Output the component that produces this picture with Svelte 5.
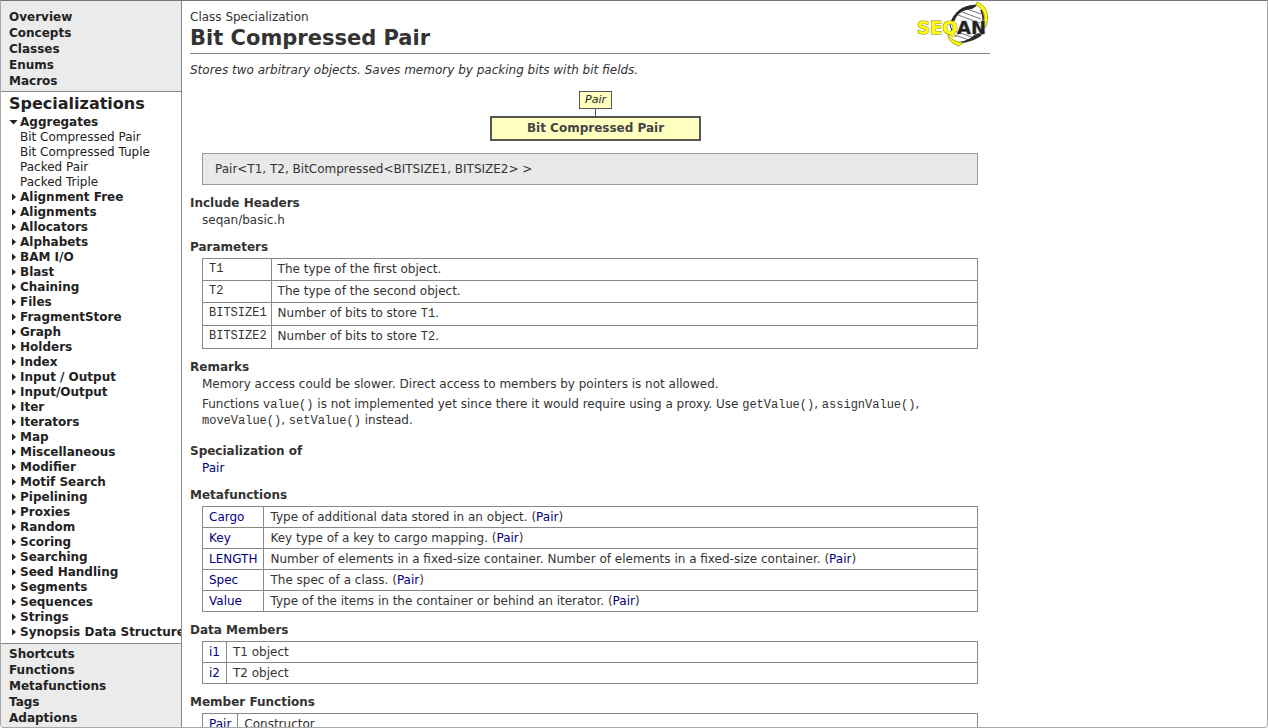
<script>
  const topLinks = ['Overview', 'Concepts', 'Classes', 'Enums', 'Macros'];
  const bottomLinks = ['Shortcuts', 'Functions', 'Metafunctions', 'Tags', 'Adaptions'];
  const groups = [
    { name: 'Aggregates', children: ['Bit Compressed Pair', 'Bit Compressed Tuple', 'Packed Pair', 'Packed Triple'] },
    ...[
      'Alignment Free', 'Alignments', 'Allocators', 'Alphabets', 'BAM I/O', 'Blast', 'Chaining', 'Files',
      'FragmentStore', 'Graph', 'Holders', 'Index', 'Input / Output', 'Input/Output', 'Iter', 'Iterators',
      'Map', 'Miscellaneous', 'Modifier', 'Motif Search', 'Pipelining', 'Proxies', 'Random', 'Scoring',
      'Searching', 'Seed Handling', 'Segments', 'Sequences', 'Strings', 'Synopsis Data Structures'
    ].map((name) => ({ name, children: [] }))
  ];
  const params = [
    { name: 'T1', text: 'The type of the first object.' },
    { name: 'T2', text: 'The type of the second object.' },
    { name: 'BITSIZE1', text: 'Number of bits to store ', code: 'T1' },
    { name: 'BITSIZE2', text: 'Number of bits to store ', code: 'T2' }
  ];
  const metafunctions = [
    ['Cargo', 'Type of additional data stored in an object.'],
    ['Key', 'Key type of a key to cargo mapping.'],
    ['LENGTH', 'Number of elements in a fixed-size container. Number of elements in a fixed-size container.'],
    ['Spec', 'The spec of a class.'],
    ['Value', 'Type of the items in the container or behind an iterator.']
  ];
  const members = [['i1', 'T1 object'], ['i2', 'T2 object']];
</script>

<div class="frame">
  <nav class="sidebar">
    <ul class="links upper">
      {#each topLinks as link}<li><a href="#top">{link}</a></li>{/each}
    </ul>
    <section class="current">
      <h2>Specializations</h2>
      <ul class="tree">
        {#each groups as group}
          <li>
            <a class="group" href="#top">
              <svg width="9" height="9" viewBox="0 0 9 9" aria-hidden="true">
                {#if group.children.length}
                  <path d="M0.5 2h8L4.500 6.500z" />
                {:else}
                  <path d="M3 0.5v7L7 4z" />
                {/if}
              </svg>
              <span>{group.name}</span>
            </a>
            {#if group.children.length}
              <ul class="leaves">
                {#each group.children as child}<li><a href="#top">{child}</a></li>{/each}
              </ul>
            {/if}
          </li>
        {/each}
      </ul>
    </section>
    <ul class="links lower">
      {#each bottomLinks as link}<li><a href="#top">{link}</a></li>{/each}
    </ul>
  </nav>

  <main>
    <article id="top">
      <header>
        <div>
          <div>Class Specialization</div>
          <h1>Bit Compressed Pair</h1>
        </div>
        <svg class="logo" width="72" height="46" viewBox="0 0 72 46" role="img" aria-label="SeqAn">
          <path d="M33 32C31 18 42 4 60 4L67 10C70 24 60 36 46 41L37 40Z" fill="#fff" />
          <path d="M50 8l14 5M45 11l19 7M41 14l22 8M38 34l14 5M37 30l18 6" fill="none" stroke="#777" stroke-width="1" />
          <path d="M35 30L33 24M33 24C36 12 46 5 59 4" fill="none" stroke="#2b2b2b" stroke-width="1" />
          <path d="M34 23C36 10 47 3 61 4L55 8C45 9 40 13 38 19Z" fill="#2b2b2b" />
          <path d="M42 41C49 40 55 37 58 33L68 31C63 37 56 40 46 42Z" fill="#2b2b2b" />
          <path d="M64 9C67 14 67 20 65 27" fill="none" stroke="#2b2b2b" stroke-width="2" />
          <path d="M60 1C69 4 74 15 68 27L66 25C69 15 67 8 59 4Z" fill="#ff0" stroke="#a9a52b" stroke-width="1" />
          <path d="M31 32C33 38 38 41 46 42L42 45C35 43 30 38 31 32Z" fill="#ff0" stroke="#a9a52b" stroke-width="1" />
          <text x="0" y="33" fill="#ff0" stroke="#85812a" stroke-width="1" paint-order="stroke">SEQ</text>
          <text x="40" y="33" fill="#222" stroke="#bbb" stroke-width="1" paint-order="stroke">AN</text>
        </svg>
      </header>
      <p class="summary">Stores two arbitrary objects. Saves memory by packing bits with bit fields.</p>
      <div class="hierarchy">
        <a class="parent" href="#top">Pair</a>
        <span class="stem"></span>
        <strong>Bit Compressed Pair</strong>
      </div>
      <div class="signature">Pair&lt;T1, T2, BitCompressed&lt;BITSIZE1, BITSIZE2&gt; &gt;</div>

      <section>
        <h3>Include Headers</h3>
        <div class="body">seqan/basic.h</div>
      </section>
      <section>
        <h3>Parameters</h3>
        <table class="params">
          <tbody>
            {#each params as p}
              <tr>
                <td><code>{p.name}</code></td>
                <td>{p.text}{#if p.code}<code>{p.code}</code>.{/if}</td>
              </tr>
            {/each}
          </tbody>
        </table>
      </section>
      <section>
        <h3>Remarks</h3>
        <div class="body">
          <p>Memory access could be slower. Direct access to members by pointers is not allowed.</p>
          <p>Functions <code>value()</code> is not implemented yet since there it would require using a proxy. Use <code>getValue()</code>, <code>assignValue()</code>, <code>moveValue()</code>, <code>setValue()</code> instead.</p>
        </div>
      </section>
      <section>
        <h3>Specialization of</h3>
        <div class="body"><a href="#top">Pair</a></div>
      </section>
      <section>
        <h3>Metafunctions</h3>
        <table>
          <tbody>
            {#each metafunctions as [name, text]}
              <tr><td><a href="#top">{name}</a></td><td>{text} (<a href="#top">Pair</a>)</td></tr>
            {/each}
          </tbody>
        </table>
      </section>
      <section>
        <h3>Data Members</h3>
        <table>
          <tbody>
            {#each members as [name, text]}
              <tr><td><a href="#top">{name}</a></td><td>{text}</td></tr>
            {/each}
          </tbody>
        </table>
      </section>
      <section>
        <h3>Member Functions</h3>
        <table>
          <tbody>
            <tr><td><a href="#top">Pair</a></td><td>Constructor</td></tr>
          </tbody>
        </table>
      </section>
    </article>
  </main>
</div>

<style>
  :global(body) {
    margin: 0;
    background: #fff;
  }
  .frame {
    box-sizing: border-box;
    display: flex;
    height: 100vh;
    overflow: hidden;
    border: 1px solid #a9a9a9;
    border-top-color: #777;
    border-radius: 0 0 4px 4px;
    font: 12px/16px Verdana, "DejaVu Sans", sans-serif;
    color: #333;
    background: #fff;
  }
  h1, h2, h3, p, ul {
    margin: 0;
    padding: 0;
  }
  ul {
    list-style: none;
  }
  a {
    color: #000080;
    text-decoration: none;
  }
  code {
    font: 12px/16px "Courier New", "Liberation Mono", monospace;
  }

  .sidebar {
    box-sizing: border-box;
    flex: 0 0 181px;
    display: flex;
    flex-direction: column;
    overflow: hidden;
    border-right: 1px solid #888;
    white-space: nowrap;
  }
  .sidebar a {
    color: #222;
  }
  .links {
    background: #ebebeb;
    font-weight: bold;
  }
  .upper {
    padding: 8px 8px 2px;
  }
  .lower {
    flex: 1;
    padding: 2px 8px 0;
  }
  .current {
    padding: 1px 0 3px 8px;
    border: solid #888;
    border-width: 1px 0;
  }
  h2 {
    font-size: 16px;
    line-height: 22px;
    color: #222;
  }
  .tree {
    line-height: 15px;
  }
  .group {
    display: flex;
    align-items: center;
    gap: 2px;
    font-weight: bold;
  }
  .group svg {
    flex: none;
    fill: #222;
  }
  .leaves {
    padding-left: 11px;
  }

  main {
    flex: 1;
    min-width: 0;
    overflow: hidden;
    padding: 0 8px;
  }
  article {
    max-width: 800px;
  }
  header {
    display: flex;
    justify-content: space-between;
    align-items: flex-start;
    padding-bottom: 2px;
    border-bottom: 1px solid #888;
  }
  header > div {
    padding-top: 8px;
  }
  h1 {
    font-size: 21px;
    line-height: 26px;
  }
  .logo {
    margin-right: 1px;
    font: bold 18px Verdana, "DejaVu Sans", sans-serif;
  }
  .summary {
    margin: 8px 0 13px;
    font-style: italic;
  }
  .hierarchy {
    display: flex;
    flex-direction: column;
    align-items: center;
    margin: 0 0 12px 11px;
  }
  .parent {
    padding: 0 5px;
    border: 1px solid #555;
    background: #ffffc0;
    color: #222;
    font-size: 11px;
    font-style: italic;
  }
  .stem {
    width: 1px;
    height: 7px;
    background: #555;
  }
  .hierarchy strong {
    padding: 0 35px;
    border: 2px solid #555;
    background: #ffffc0;
    color: #444;
    line-height: 21px;
  }
  .signature {
    margin: 0 12px 9px;
    padding: 7px 12px;
    border: 1px solid #999;
    background: #e9e9e9;
  }
  h3 {
    padding-top: 1px;
    font-size: 12px;
    line-height: 16px;
  }
  .body {
    margin: 1px 12px 10px;
  }
  .body p {
    padding-bottom: 4px;
  }
  .body code {
    line-height: 12px;
  }
  table {
    width: calc(100% - 24px);
    margin: 3px 12px 9px;
    border-collapse: collapse;
  }
  td {
    padding: 2px 6px;
    border: 1px solid #888;
    vertical-align: top;
  }
  td:first-child {
    width: 1px;
    white-space: nowrap;
  }
  .params td {
    padding-bottom: 3px;
  }
  .params td:first-child {
    padding-right: 4px;
    line-height: 12px;
  }
</style>
